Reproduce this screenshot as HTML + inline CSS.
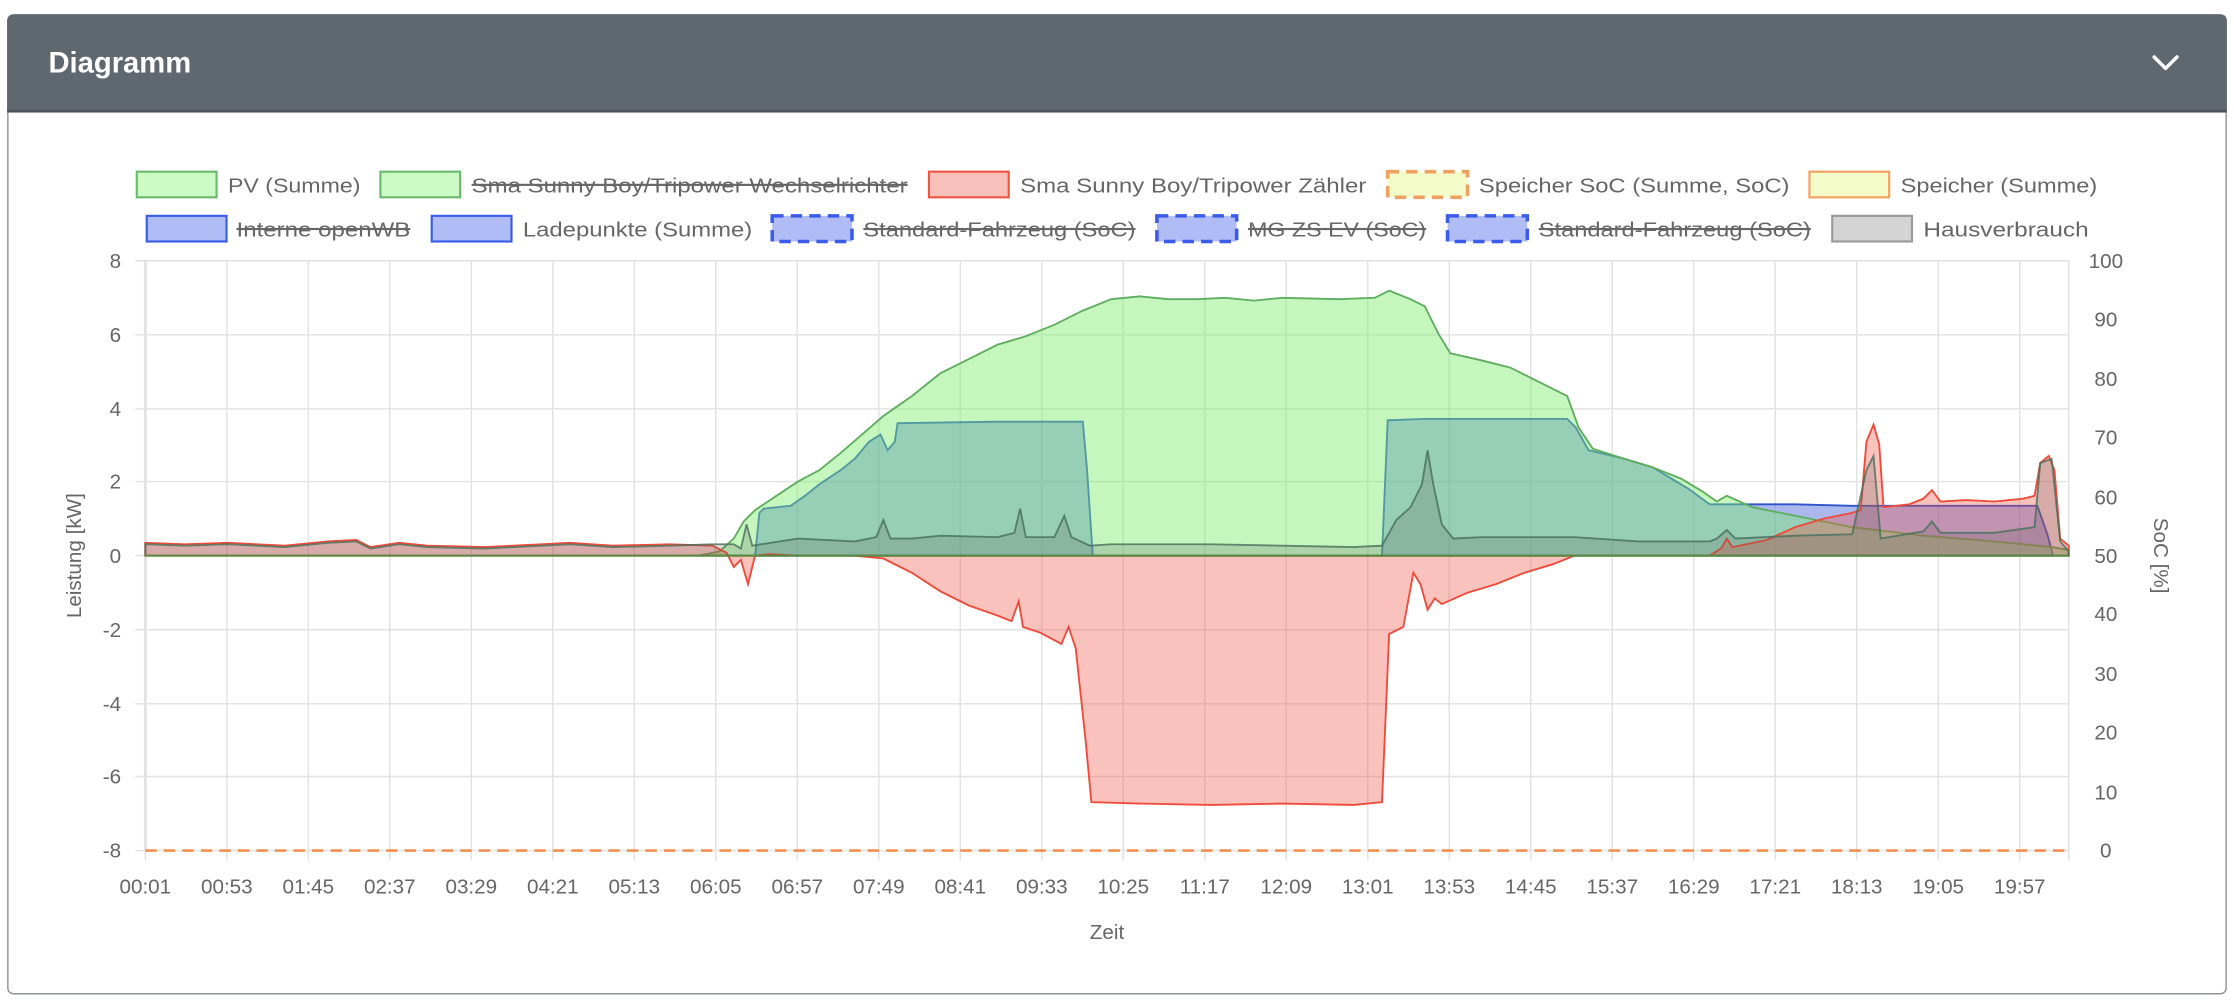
<!DOCTYPE html>
<html><head><meta charset="utf-8"><style>
html,body{margin:0;padding:0;background:#fff;width:2234px;height:1008px;overflow:hidden}
svg{display:block}
text{font-family:"Liberation Sans",Helvetica,Arial,sans-serif;fill:#666}
</style></head><body>
<svg width="2234" height="1008" viewBox="0 0 1568 707.5" xmlns="http://www.w3.org/2000/svg">
<!-- card -->
<rect x="5.5" y="10.5" width="1557" height="687" rx="4" fill="#fff" stroke="#8f9399" stroke-width="1"/>
<path d="M5,78 V15 Q5,10 10,10 H1558 Q1563,10 1563,15 V78 Z" fill="#5f676f"/>
<rect x="5" y="77" width="1558" height="2" fill="#4e555c"/>
<text x="34" y="51" style="font-size:20.5px;font-weight:bold;fill:#fff">Diagramm</text>
<path d="M1512,40 L1520,48 L1528,40" fill="none" stroke="#fff" stroke-width="2.4" stroke-linecap="round" stroke-linejoin="round"/>

<!-- legend row 1 -->
<g style="font-size:14.5px">
<rect x="96" y="120.5" width="56" height="18" fill="#ccfbc6" stroke="#6cb86c" stroke-width="1.5"/>
<text x="160" y="135" textLength="93" lengthAdjust="spacingAndGlyphs">PV (Summe)</text>
<rect x="267" y="120.5" width="56" height="18" fill="#ccfbc6" stroke="#6cb86c" stroke-width="1.5"/>
<text x="331" y="135" textLength="306" lengthAdjust="spacingAndGlyphs">Sma Sunny Boy/Tripower Wechselrichter</text>
<rect x="331" y="129" width="306" height="1.5" fill="#666"/>
<rect x="652" y="120.5" width="56" height="18" fill="#f8c0ba" stroke="#ee5545" stroke-width="1.5"/>
<text x="716" y="135" textLength="243" lengthAdjust="spacingAndGlyphs">Sma Sunny Boy/Tripower Zähler</text>
<rect x="974" y="120.5" width="56" height="18" fill="#f3fbc8" stroke="#f0a060" stroke-width="2.5" stroke-dasharray="8,5"/>
<text x="1038" y="135" textLength="218" lengthAdjust="spacingAndGlyphs">Speicher SoC (Summe, SoC)</text>
<rect x="1270" y="120.5" width="56" height="18" fill="#f3fbc8" stroke="#f0a060" stroke-width="1.5"/>
<text x="1334" y="135" textLength="138" lengthAdjust="spacingAndGlyphs">Speicher (Summe)</text>
<!-- row 2 -->
<rect x="103" y="151.5" width="56" height="18" fill="#b0bcf5" stroke="#3b5bea" stroke-width="1.5"/>
<text x="166" y="166" textLength="122" lengthAdjust="spacingAndGlyphs">Interne openWB</text>
<rect x="166" y="160" width="122" height="1.5" fill="#666"/>
<rect x="303" y="151.5" width="56" height="18" fill="#b0bcf5" stroke="#3b5bea" stroke-width="1.5"/>
<text x="367" y="166" textLength="161" lengthAdjust="spacingAndGlyphs">Ladepunkte (Summe)</text>
<rect x="542" y="151.5" width="56" height="18" fill="#b0bcf5" stroke="#3b5bea" stroke-width="2.5" stroke-dasharray="8,5"/>
<text x="606" y="166" textLength="191" lengthAdjust="spacingAndGlyphs">Standard-Fahrzeug (SoC)</text>
<rect x="606" y="160" width="191" height="1.5" fill="#666"/>
<rect x="812" y="151.5" width="56" height="18" fill="#b0bcf5" stroke="#3b5bea" stroke-width="2.5" stroke-dasharray="8,5"/>
<text x="876" y="166" textLength="125" lengthAdjust="spacingAndGlyphs">MG ZS EV (SoC)</text>
<rect x="876" y="160" width="125" height="1.5" fill="#666"/>
<rect x="1016" y="151.5" width="56" height="18" fill="#b0bcf5" stroke="#3b5bea" stroke-width="2.5" stroke-dasharray="8,5"/>
<text x="1080" y="166" textLength="191" lengthAdjust="spacingAndGlyphs">Standard-Fahrzeug (SoC)</text>
<rect x="1080" y="160" width="191" height="1.5" fill="#666"/>
<rect x="1286" y="151.5" width="56" height="18" fill="#d4d4d4" stroke="#999" stroke-width="1.5"/>
<text x="1350" y="166" textLength="116" lengthAdjust="spacingAndGlyphs">Hausverbrauch</text>
</g>

<!-- grid -->
<g stroke="#e2e2e2" stroke-width="1">
<path d="M95,183H1452 M95,235H1452 M95,287H1452 M95,338H1452 M95,390H1452 M95,442H1452 M95,494H1452 M95,545H1452 M95,597H1452"/>
<path d="M102,183V604 M159.2,183V604 M216.4,183V604 M273.6,183V604 M330.8,183V604 M388,183V604 M445.2,183V604 M502.4,183V604 M559.6,183V604 M616.8,183V604 M674,183V604 M731.2,183V604 M788.4,183V604 M845.6,183V604 M902.8,183V604 M960,183V604 M1017.2,183V604 M1074.4,183V604 M1131.6,183V604 M1188.8,183V604 M1246,183V604 M1303.2,183V604 M1360.4,183V604 M1417.6,183V604 M1452,183V604"/>
</g>
<rect x="101" y="183" width="2" height="414" fill="#e2e2e2"/>

<!-- data -->
<path d="M530,390 L533,360 L536,357 L555,355 L565,348 L575,340 L590,330 L600,322 L610,310 L618,305 L623,316 L628,310 L630,297 L700,296 L760,296 L763,330 L767,390 L970,390 L974,295 L1000,294 L1100,294 L1106,300 L1115,316 L1140,322 L1160,328 L1185,343 L1200,354 L1260,354 L1300,355 L1380,355 L1430,355 L1437,375 L1441,390 Z" fill="rgba(55,85,215,0.42)" stroke="#2f55c8" stroke-width="1.3"/>
<path d="M490,390 L505,387 L515,378 L522,366 L530,358 L545,348 L560,338 L575,330 L590,318 L605,305 L620,292 L640,278 L660,262 L680,252 L700,242 L720,236 L740,228 L760,218 L780,210 L800,208 L820,210 L840,210 L860,209 L880,211 L900,209 L940,210 L965,209 L975,204 L990,210 L1000,215 L1010,235 L1018,248 L1040,253 L1060,258 L1080,268 L1100,278 L1108,300 L1118,315 L1140,322 L1160,328 L1180,336 L1195,345 L1205,352 L1212,348 L1230,356 L1260,362 L1300,370 L1350,376 L1400,380 L1440,384 L1452,386 L1452,390 Z" fill="rgba(125,235,110,0.45)" stroke="#5fae5f" stroke-width="1.3"/>
<path d="M102,390 L102,381 L130,382 L160,381 L200,383 L230,380 L250,379 L260,384 L280,381 L300,383 L340,384 L380,382 L400,381 L430,383 L470,382 L500,383 L510,388 L515,398 L520,393 L525,410 L530,390 L540,389 L560,390 L600,390 L620,392 L640,402 L660,415 L680,425 L700,432 L710,436 L715,422 L718,440 L730,444 L745,452 L750,440 L755,455 L762,520 L766,563 L800,564 L850,565 L900,564 L950,565 L970,563 L975,445 L985,440 L992,402 L997,410 L1002,428 L1007,420 L1012,424 L1030,416 L1050,410 L1070,402 L1090,396 L1105,390 L1200,390 L1208,385 L1212,378 L1216,384 L1240,379 L1260,370 L1280,364 L1300,360 L1306,358 L1310,310 L1315,298 L1319,312 L1322,356 L1340,354 L1350,350 L1356,344 L1362,352 L1380,351 L1400,352 L1420,350 L1428,348 L1432,325 L1438,320 L1442,330 L1446,378 L1452,383 L1452,390 Z" fill="rgba(240,80,65,0.35)" stroke="#ef4a3a" stroke-width="1.3"/>
<path d="M102,390 L102,382 L130,383 L160,382 L200,384 L230,381 L250,380 L260,385 L280,382 L300,384 L340,385 L380,383 L400,382 L430,384 L470,383 L500,382 L515,382 L520,385 L524,368 L528,383 L560,378 L600,380 L615,377 L620,365 L625,378 L640,378 L660,376 L700,377 L712,374 L716,357 L720,377 L740,377 L747,362 L752,377 L765,383 L780,382 L850,382 L900,383 L950,384 L970,383 L980,365 L990,356 L998,340 L1002,316 L1006,340 L1012,368 L1020,378 L1040,377 L1080,377 L1105,377 L1150,380 L1200,380 L1205,378 L1212,372 L1218,378 L1260,376 L1300,375 L1310,330 L1315,320 L1320,378 L1350,373 L1356,366 L1362,374 L1400,374 L1428,370 L1432,325 L1440,322 L1446,380 L1452,387 L1452,390 Z" fill="rgba(90,90,90,0.22)" stroke="rgba(70,110,90,0.8)" stroke-width="1.3"/>
<path d="M102,390H1452" stroke="#4f8f3f" stroke-width="1.2"/>
<path d="M102,597H1452" stroke="#f09050" stroke-width="1.8" stroke-dasharray="8,5"/>

<!-- axis labels -->
<g style="font-size:14.5px" text-anchor="end">
<text x="85" y="188">8</text><text x="85" y="240">6</text><text x="85" y="292">4</text><text x="85" y="343">2</text><text x="85" y="395">0</text><text x="85" y="447">-2</text><text x="85" y="499">-4</text><text x="85" y="550">-6</text><text x="85" y="602">-8</text>
</g>
<g style="font-size:14.5px">
<text x="1466" y="188">100</text><text x="1470" y="229">90</text><text x="1470" y="271">80</text><text x="1470" y="312">70</text><text x="1470" y="354">60</text><text x="1470" y="395">50</text><text x="1470" y="436">40</text><text x="1470" y="478">30</text><text x="1470" y="519">20</text><text x="1470" y="561">10</text><text x="1474" y="602">0</text>
</g>
<g style="font-size:14.5px" text-anchor="middle">
<text x="102" y="627">00:01</text><text x="159.2" y="627">00:53</text><text x="216.4" y="627">01:45</text><text x="273.6" y="627">02:37</text><text x="330.8" y="627">03:29</text><text x="388" y="627">04:21</text><text x="445.2" y="627">05:13</text><text x="502.4" y="627">06:05</text><text x="559.6" y="627">06:57</text><text x="616.8" y="627">07:49</text><text x="674" y="627">08:41</text><text x="731.2" y="627">09:33</text><text x="788.4" y="627">10:25</text><text x="845.6" y="627">11:17</text><text x="902.8" y="627">12:09</text><text x="960" y="627">13:01</text><text x="1017.2" y="627">13:53</text><text x="1074.4" y="627">14:45</text><text x="1131.6" y="627">15:37</text><text x="1188.8" y="627">16:29</text><text x="1246" y="627">17:21</text><text x="1303.2" y="627">18:13</text><text x="1360.4" y="627">19:05</text><text x="1417.6" y="627">19:57</text>
<text x="777" y="659">Zeit</text>
<text transform="translate(57,390) rotate(-90)">Leistung [kW]</text>
<text transform="translate(1512,390) rotate(90)">SoC [%]</text>
</g>
</svg>
</body></html>
